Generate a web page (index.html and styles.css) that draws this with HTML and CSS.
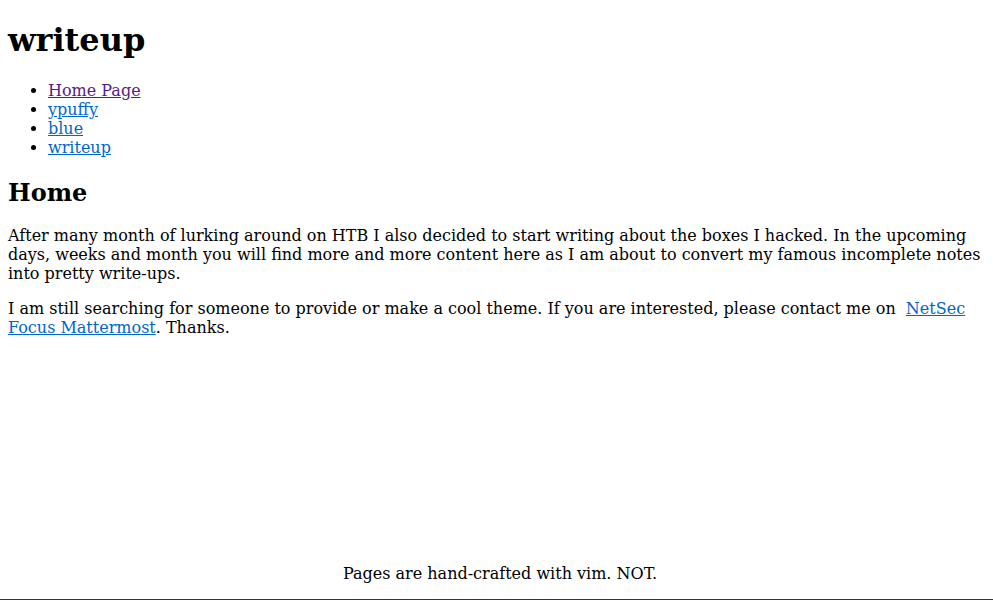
FILE: index.html
```
<!DOCTYPE html>
<html>
<head>
<meta charset="utf-8">
<title>writeup</title>
<link rel="stylesheet" href="styles.css">
</head>
<body>
<div class="page">
  <main class="content">
    <h1 class="site-title">writeup</h1>
    <ul class="nav">
      <li><a class="visited" href="#home">Home Page</a></li>
      <li><a href="#ypuffy">ypuffy</a></li>
      <li><a href="#blue">blue</a></li>
      <li><a href="#writeup">writeup</a></li>
    </ul>
    <h2 class="section-title">Home</h2>
    <p>After many month of lurking around on HTB I also decided to start writing about the boxes I hacked. In the upcoming days, weeks and month you will find more and more content here as I am about to convert my famous incomplete notes into pretty write-ups.</p>
    <p>I am still searching for someone to provide or make a cool theme. If you are interested, please contact me on &nbsp;<a href="#mattermost">NetSec Focus Mattermost</a>. Thanks.</p>
  </main>
  <footer class="footer">Pages are hand-crafted with vim. NOT.</footer>
</div>
</body>
</html>
```
FILE: styles.css
```
html, body {
  margin: 0;
  padding: 0;
}
body {
  font-family: "DejaVu Serif", serif;
  font-size: 16px;
  color: #000;
  background: #fff;
}
.page {
  min-height: 100vh;
  box-sizing: border-box;
  padding: 8px 8px 0;
  display: flex;
  flex-direction: column;
}
.content {
  flex: 1;
}
.site-title {
  font-size: 32px;
  margin: 13.44px 0 21.44px;
}
.nav {
  margin: 16px 0;
  padding-left: 40px;
}
.section-title {
  font-size: 24px;
  margin: 20.92px 0 18.92px;
}
p {
  margin: 16px 0;
}
a {
  color: #0066cc;
}
a.visited {
  color: #551a8b;
}
.footer {
  margin: 0 -8px;
  padding: 0 0 16px 7px;
  text-align: center;
  border-bottom: 1px solid #333;
}
```
